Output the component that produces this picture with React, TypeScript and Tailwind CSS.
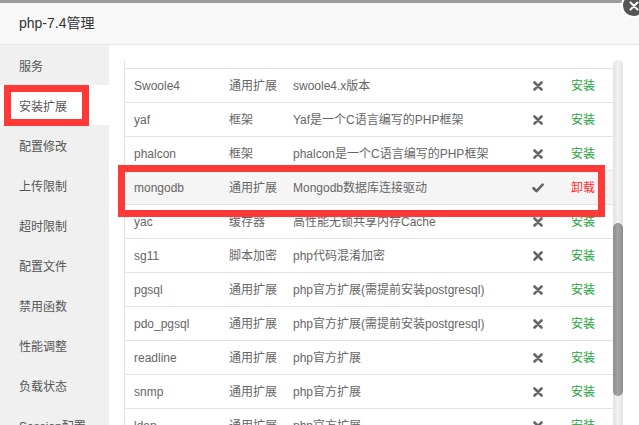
import { useMemo } from 'react';

type Ext = {
  name: string;
  type: string;
  desc: string;
  installed: boolean;
};

const exts: Ext[] = [
  { name: 'Swoole4', type: '通用扩展', desc: 'swoole4.x版本', installed: false },
  { name: 'yaf', type: '框架', desc: 'Yaf是一个C语言编写的PHP框架', installed: false },
  { name: 'phalcon', type: '框架', desc: 'phalcon是一个C语言编写的PHP框架', installed: false },
  { name: 'mongodb', type: '通用扩展', desc: 'Mongodb数据库连接驱动', installed: true },
  { name: 'yac', type: '缓存器', desc: '高性能无锁共享内存Cache', installed: false },
  { name: 'sg11', type: '脚本加密', desc: 'php代码混淆加密', installed: false },
  { name: 'pgsql', type: '通用扩展', desc: 'php官方扩展(需提前安装postgresql)', installed: false },
  { name: 'pdo_pgsql', type: '通用扩展', desc: 'php官方扩展(需提前安装postgresql)', installed: false },
  { name: 'readline', type: '通用扩展', desc: 'php官方扩展', installed: false },
  { name: 'snmp', type: '通用扩展', desc: 'php官方扩展', installed: false },
  { name: 'ldap', type: '通用扩展', desc: 'php官方扩展', installed: false },
];

const menu = ['服务', '安装扩展', '配置修改', '上传限制', '超时限制', '配置文件', '禁用函数', '性能调整', '负载状态', 'Session配置'];

function TimesIcon() {
  return (
    <svg width="10" height="10" viewBox="0 0 10 10">
      <path d="M1.5 1.5 L8.5 8.5 M8.5 1.5 L1.5 8.5" stroke="#666" strokeWidth="2.6" strokeLinecap="round" />
    </svg>
  );
}

function CheckIcon() {
  return (
    <svg width="12" height="10" viewBox="0 0 12 10">
      <path d="M1.5 5.2 L4.6 8.2 L10.6 1.6" stroke="#666" strokeWidth="2.6" fill="none" strokeLinecap="round" strokeLinejoin="round" />
    </svg>
  );
}

function Row({ ext, highlight }: { ext: Ext; highlight?: boolean }) {
  return (
    <div className={`flex items-center h-[34px] pt-[1px] border-b border-[#e3e3e3] text-[12px] text-[#666] ${highlight ? 'bg-[#f5f5f5]' : ''}`}>
      <div className="w-[95px] pl-[9px] whitespace-nowrap">{ext.name}</div>
      <div className="w-[64px] pl-[9px] whitespace-nowrap">{ext.type}</div>
      <div className="w-[237px] pl-[9px] whitespace-nowrap">{ext.desc}</div>
      <div className="w-[33px] flex justify-center">{ext.installed ? <CheckIcon /> : <TimesIcon />}</div>
      <div className="flex-1 pl-[17px] whitespace-nowrap">
        {ext.installed ? <span className="text-[#ff2d2d]">卸载</span> : <span className="text-[#20a53a]">安装</span>}
      </div>
    </div>
  );
}

export default function App() {
  const rows = useMemo(() => exts, []);

  return (
    <div className="relative w-[639px] h-[425px] overflow-hidden bg-white font-['Liberation_Sans','Noto_Sans_CJK_SC',sans-serif]">
      <div className="h-[3px] mr-[16px] bg-[#9c9c9c]" />
      <div className="h-[42px] bg-[#f8f8f8] border-b border-[#e6e6e6] flex items-center pl-[19px] text-[14px] text-[#333]">
        php-7.4管理
      </div>

      {/* close button */}
      <div className="absolute left-[621px] top-[-7px] w-[25px] h-[25px] rounded-full bg-[#555] border-2 border-white flex items-center justify-center">
        <svg width="10" height="10" viewBox="0 0 10 10">
          <path d="M1.5 1.5 L8.5 8.5 M8.5 1.5 L1.5 8.5" stroke="#fff" strokeWidth="2" strokeLinecap="round" />
        </svg>
      </div>

      <div className="flex h-[380px]">
        <aside className="w-[109px] bg-[#f0f0f0] shrink-0">
          {menu.map((m, i) => (
            <div
              key={m}
              className={`h-[40px] flex items-center pt-[4px] pl-[19px] text-[12px] text-[#555] whitespace-nowrap ${i === 1 ? 'bg-white' : ''}`}
            >
              {m}
            </div>
          ))}
        </aside>

        <main className="flex-1 pl-[15px] pt-[15px] pr-[16px] overflow-hidden">
          <div className="flex h-full">
            <div className="flex-1 border-l border-[#e3e3e3] overflow-hidden">
              <div className="-mt-[25px]">
                <div className="flex items-center h-[34px] border-b border-[#e3e3e3] text-[12px] text-[#666]">
                  <div className="w-[95px] pl-[9px]">名称</div>
                  <div className="w-[64px] pl-[9px]">类型</div>
                  <div className="w-[237px] pl-[9px]">说明</div>
                  <div className="w-[33px]">状态</div>
                  <div className="flex-1 pl-[17px]">操作</div>
                </div>
                {rows.map((e) => (
                  <Row key={e.name} ext={e} highlight={e.name === 'mongodb'} />
                ))}
              </div>
            </div>
            {/* scrollbar */}
            <div className="w-[10px] rounded-t-[5px] bg-gradient-to-r from-[#e2e2e2] via-[#f2f2f2] to-[#e2e2e2] pt-[163px]">
              <div className="h-[173px] rounded-[5px] bg-gradient-to-r from-[#8e8e8e] via-[#a2a2a2] to-[#8e8e8e]" />
            </div>
          </div>
        </main>
      </div>

      {/* annotation boxes */}
      <div className="absolute left-[4px] top-[85px] w-[85px] h-[41px] border-[7px] border-[#ff3838]" />
      <div className="absolute left-[118px] top-[165px] w-[487px] h-[52px] border-[7px] border-[#ff3838]" />
    </div>
  );
}
